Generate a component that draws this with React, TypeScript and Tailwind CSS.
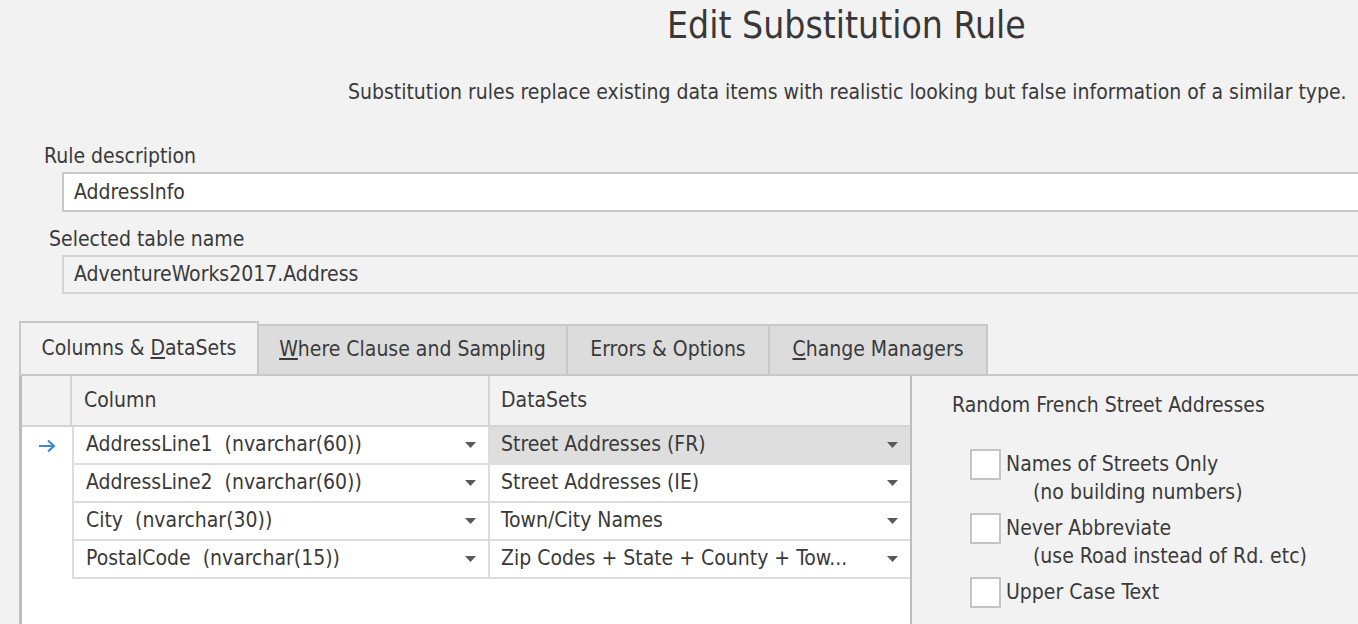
import React from "react";

const font = { fontFamily: '"DejaVu Sans Condensed", "DejaVu Sans", Tahoma, sans-serif' };

function Caret() {
  return (
    <svg width="11" height="6" viewBox="0 0 11 6" className="shrink-0">
      <path d="M0 0 H11 L5.5 6 Z" fill="#5a5a5a" />
    </svg>
  );
}

function Check() {
  return <div className="w-[31px] h-[31px] bg-white border-2 border-[#c4c4c4] shrink-0" />;
}

const rows = [
  { col: "AddressLine1  (nvarchar(60))", ds: "Street Addresses (FR)", sel: true },
  { col: "AddressLine2  (nvarchar(60))", ds: "Street Addresses (IE)" },
  { col: "City  (nvarchar(30))", ds: "Town/City Names" },
  { col: "PostalCode  (nvarchar(15))", ds: "Zip Codes + State + County + Tow..." },
];

export default function App() {
  return (
    <div
      className="w-[1358px] h-[624px] overflow-hidden bg-[#f2f2f2] text-[#3a3a3a] flex flex-col"
      style={font}
    >
      <div className="pl-[667px] pt-[3px] h-[66px] text-[37px] leading-[46px] text-[#383838] whitespace-nowrap">
        Edit Substitution Rule
      </div>
      <div className="pl-[348px] h-[50px] text-[21px] leading-[52px] whitespace-nowrap">
        Substitution rules replace existing data items with realistic looking but false information of a similar type.
      </div>
      <div className="pl-[44px] pt-[20px] h-[56px] text-[21px] leading-[40px] whitespace-nowrap">Rule description</div>
      <div className="ml-[62px] w-[1320px] h-[40px] bg-white border-2 border-[#c8c8c8] pl-[10px] text-[21px] leading-[36px] whitespace-nowrap">
        AddressInfo
      </div>
      <div className="pl-[49px] h-[43px] text-[21px] leading-[54px] whitespace-nowrap">Selected table name</div>
      <div className="ml-[62px] w-[1320px] h-[39px] bg-[#f2f2f2] border-2 border-[#d4d4d4] pl-[10px] text-[21px] leading-[35px] whitespace-nowrap">
        AdventureWorks2017.Address
      </div>

      <div className="ml-[19px] mt-[27px] flex items-end h-[53px] text-[21px] whitespace-nowrap">
        <div className="w-[240px] h-[53px] border-2 border-b-0 border-[#c8c8c8] bg-[#f2f2f2] flex items-center justify-center">
          <span>
            Columns &amp; <span className="underline underline-offset-2">D</span>ataSets
          </span>
        </div>
        <div className="w-[309px] h-[50px] border-2 border-l-0 border-b-0 border-[#c8c8c8] bg-[#dcdcdc] flex items-center justify-center">
          <span>
            <span className="underline underline-offset-2">W</span>here Clause and Sampling
          </span>
        </div>
        <div className="w-[202px] h-[50px] border-2 border-l-0 border-b-0 border-[#c8c8c8] bg-[#dcdcdc] flex items-center justify-center">
          Errors &amp; Options
        </div>
        <div className="w-[218px] h-[50px] border-2 border-l-0 border-b-0 border-[#c8c8c8] bg-[#dcdcdc] flex items-center justify-center">
          <span>
            <span className="underline underline-offset-2">C</span>hange Managers
          </span>
        </div>
      </div>

      <div className="ml-[19px] flex-1 flex border-t-2 border-[#c8c8c8] text-[21px] whitespace-nowrap">
        <div className="w-[893px] border-l-[3px] border-r-2 border-[#bdbdbd] bg-white flex flex-col">
          <div className="h-[51px] bg-[#f2f2f2] flex border-b-2 border-[#d4d4d4]">
            <div className="w-[50px] border-r-2 border-[#d4d4d4]" />
            <div className="w-[418px] border-r-2 border-[#d4d4d4] pl-[12px] flex items-center">Column</div>
            <div className="flex-1 pl-[11px] flex items-center">DataSets</div>
          </div>
          {rows.map((r, i) => (
            <div key={i} className="h-[38px] flex">
              <div className="w-[50px] flex items-center pl-[16px]">
                {r.sel ? (
                  <svg width="18" height="14" viewBox="0 0 18 14">
                    <path d="M1 7 H16 M10 1.5 L16 7 L10 12.5" stroke="#3a86d8" strokeWidth="2" fill="none" />
                  </svg>
                ) : null}
              </div>
              <div className="w-[418px] border-l-2 border-r-2 border-b-2 border-[#dcdcdc] pl-[12px] pr-[12px] flex items-center justify-between">
                <span className="whitespace-pre">{r.col}</span>
                <Caret />
              </div>
              <div
                className={
                  "flex-1 border-b-2 border-[#dcdcdc] pl-[11px] pr-[12px] flex items-center justify-between " +
                  (r.sel ? "bg-[#dedede]" : "bg-white")
                }
              >
                <span className="whitespace-pre">{r.ds}</span>
                <Caret />
              </div>
            </div>
          ))}
        </div>
        <div className="flex-1 pl-[40px] pt-[14px] flex flex-col">
          <div className="h-[30px] leading-[30px]">Random French Street Addresses</div>
          <div className="mt-[29px] flex flex-col gap-[7px] pl-[18px]">
            <div className="flex gap-[5px] h-[57px]">
              <Check />
              <div>
                <div className="leading-[31px]">Names of Streets Only</div>
                <div className="pl-[27px] leading-[24px]">(no building numbers)</div>
              </div>
            </div>
            <div className="flex gap-[5px] h-[57px]">
              <Check />
              <div>
                <div className="leading-[31px]">Never Abbreviate</div>
                <div className="pl-[27px] leading-[24px]">(use Road instead of Rd. etc)</div>
              </div>
            </div>
            <div className="flex gap-[5px]">
              <Check />
              <div className="leading-[31px]">Upper Case Text</div>
            </div>
          </div>
        </div>
      </div>
    </div>
  );
}
